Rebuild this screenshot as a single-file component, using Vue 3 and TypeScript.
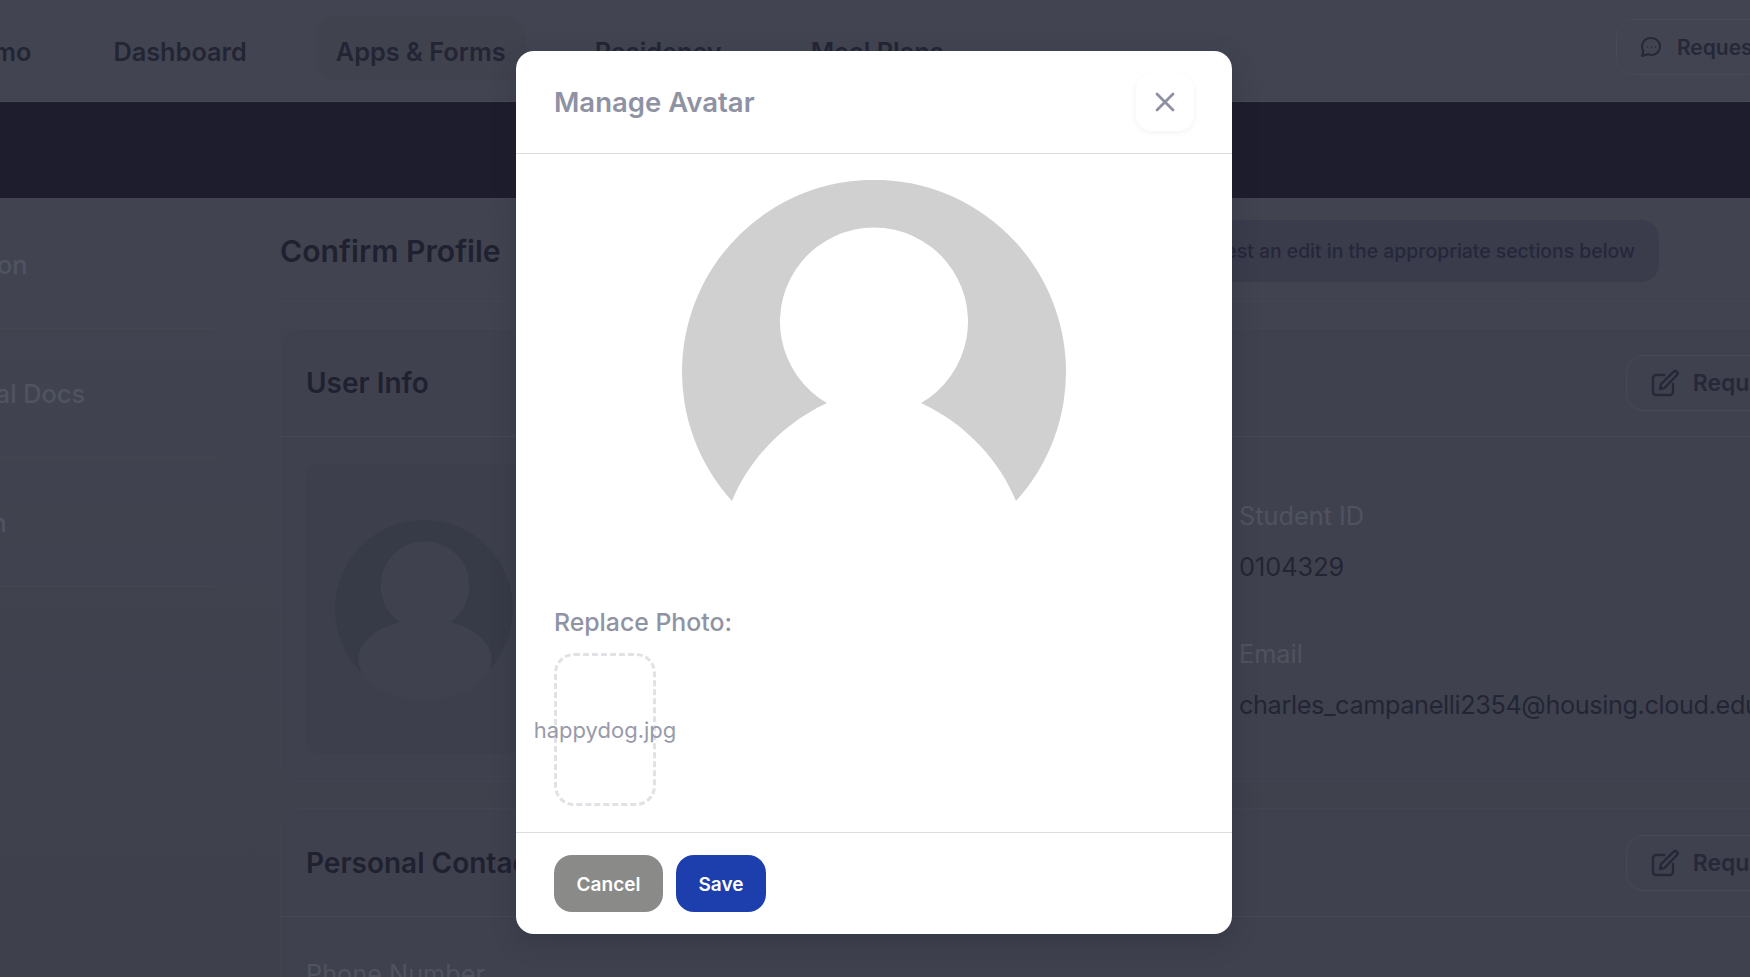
<template>
  <div class="screen">
    <div class="page">
      <header class="nav">
        <a
          v-for="item in navItems"
          :key="item"
          class="nav-item"
          :class="{ active: item === 'Apps & Forms' }"
        >
          {{ item }}
        </a>
        <button class="ghost-btn nav-action">
          <svg class="chat-icon" viewBox="0 0 24 24" fill="none" stroke="currentColor" stroke-width="2" stroke-linejoin="round">
            <path d="M12.5 3a8.5 8.5 0 1 1-3.600 16.200L3 21l1.400-5A8.500 8.500 0 0 1 12.500 3z" />
            <circle cx="8.6" cy="12" r=".7" fill="currentColor" stroke="none" />
            <circle cx="12.5" cy="12" r=".7" fill="currentColor" stroke="none" />
            <circle cx="16.4" cy="12" r=".7" fill="currentColor" stroke="none" />
          </svg>
          Request Support
        </button>
      </header>
      <div class="band"></div>

      <div class="main">
        <aside class="sidebar">
          <div v-for="link in sideLinks" :key="link" class="side-row">{{ link }}</div>
        </aside>

        <section class="content">
          <div class="title-row">
            <h1>Confirm Profile</h1>
            <div class="notice">Please request an edit in the appropriate sections below</div>
          </div>

          <div class="card">
            <div class="card-head">
              <h2>User Info</h2>
              <button class="ghost-btn edit-btn">
                <svg class="edit-icon" viewBox="0 0 28 28" fill="none" stroke="currentColor" stroke-width="2.4" stroke-linecap="round" stroke-linejoin="round">
                  <path d="M13 6H5a3 3 0 0 0-3 3v14a3 3 0 0 0 3 3h14a3 3 0 0 0 3-3v-8" />
                  <path d="M9 20l1-5L22.500 2.800a2.400 2.400 0 0 1 3.400 3.400L13.500 19z" />
                </svg>
                Request Edit
              </button>
            </div>
            <div class="user-body">
              <div class="avatar-tile">
                <svg class="small-avatar" viewBox="0 0 176 176">
                  <circle cx="88" cy="88" r="88" fill="#373a47" />
                  <circle cx="89" cy="65" r="44" fill="#3f424e" />
                  <ellipse cx="89" cy="138" rx="66" ry="40" fill="#3f424e" />
                </svg>
              </div>
              <div class="fields">
                <div class="field">
                  <span class="field-label">Student ID</span>
                  <span class="field-value">0104329</span>
                </div>
                <div class="field">
                  <span class="field-label">Email</span>
                  <span class="field-value email">charles_campanelli2354@housing.cloud.edu</span>
                </div>
              </div>
            </div>
          </div>

          <div class="card">
            <div class="card-head">
              <h2>Personal Contact</h2>
              <button class="ghost-btn edit-btn">
                <svg class="edit-icon" viewBox="0 0 28 28" fill="none" stroke="currentColor" stroke-width="2.4" stroke-linecap="round" stroke-linejoin="round">
                  <path d="M13 6H5a3 3 0 0 0-3 3v14a3 3 0 0 0 3 3h14a3 3 0 0 0 3-3v-8" />
                  <path d="M9 20l1-5L22.500 2.800a2.400 2.400 0 0 1 3.400 3.400L13.500 19z" />
                </svg>
                Request Edit
              </button>
            </div>
            <div class="contact-body">
              <span class="field-label">Phone Number</span>
            </div>
          </div>
        </section>
      </div>
    </div>

    <div class="overlay">
      <div class="modal">
        <div class="modal-head">
          <h3>Manage Avatar</h3>
          <button class="close-btn" aria-label="Close">
            <svg viewBox="0 0 20 20" fill="none" stroke="currentColor" stroke-width="2.800" stroke-linecap="round">
              <path d="M2 2l16 16M18 2L2 18" />
            </svg>
          </button>
        </div>
        <div class="modal-body">
          <svg class="big-avatar" viewBox="0 0 384 384">
            <path
              fill="#d0d0d0"
              d="M50 321A192 192 0 1 1 334 321C318 282 286 245 239 223A94 94 0 1 0 145 223C98 245 66 282 50 321z"
            />
          </svg>
          <p class="replace-label">Replace Photo:</p>
          <div class="dropzone">{{ fileName }}</div>
        </div>
        <div class="modal-foot">
          <button class="btn cancel">Cancel</button>
          <button class="btn save">Save</button>
        </div>
      </div>
    </div>
  </div>
</template>

<script setup lang="ts">
const navItems: string[] = ["Demo", "Dashboard", "Apps & Forms", "Residency", "Meal Plans"];
const sideLinks: string[] = ["Confirmation", "Confidential Docs", "Application"];
const fileName = "happydog.jpg";
</script>

<style>
html,
body {
  margin: 0;
  background: #40434f;
}
</style>

<style scoped>
.screen {
  position: relative;
  width: 1750px;
  height: 977px;
  overflow: hidden;
  font-family: Inter, "Liberation Sans", sans-serif;
  background: linear-gradient(#424551, #3e404c);
  color: #21233a;
}

.page {
  width: 2040px;
  margin-left: -150px;
}

.nav {
  display: flex;
  align-items: center;
  gap: 49px;
  height: 102px;
  padding: 0 20px 0 90px;
  box-sizing: border-box;
  border-bottom: 1px solid #474a56;
}

.nav-item {
  display: flex;
  align-items: center;
  height: 63px;
  margin-bottom: 5px;
  padding: 6px 20px 0;
  box-sizing: border-box;
  font-size: 25.3px;
  font-weight: 600;
  color: #232535;
  border-radius: 18px;
}

.nav-item:first-child {
  margin-right: -7px;
}

.nav-item.active {
  background: #40424e;
}

.ghost-btn {
  display: flex;
  align-items: center;
  height: 56px;
  padding: 0 20px;
  font-family: inherit;
  font-weight: 600;
  color: #26283a;
  background: transparent;
  border: 1px solid #484b57;
  border-radius: 18px;
  white-space: nowrap;
}

.nav-action {
  gap: 14px;
  margin-left: auto;
  margin-top: -7px;
  padding: 0 22px;
  font-size: 21px;
}

.chat-icon {
  width: 24px;
  height: 24px;
}

.band {
  height: 96px;
  background: #1e1d2e;
}

.main {
  display: flex;
}

.sidebar {
  width: 365px;
  padding: 2px 0 0 20px;
  box-sizing: border-box;
  flex: none;
}

.side-row {
  height: 129px;
  display: flex;
  align-items: center;
  box-sizing: border-box;
  font-size: 25.3px;
  font-weight: 500;
  white-space: nowrap;
  color: #505361;
  border-bottom: 1px solid #444752;
}

.content {
  margin-left: 65px;
  width: 1603px;
  flex: none;
}

.title-row {
  display: flex;
  align-items: center;
  justify-content: space-between;
  height: 104px;
  padding: 2px 224px 0 0;
  box-sizing: border-box;
  border-bottom: 1px solid #444752;
}

h1 {
  margin: 0;
  font-size: 30.2px;
  font-weight: 600;
  color: #1f2130;
}

.notice {
  display: flex;
  align-items: center;
  height: 62px;
  padding: 0 24px;
  font-size: 19.4px;
  font-weight: 500;
  color: #25273a;
  background: #3a3c4c;
  border-radius: 18px;
}

.card {
  margin-top: 26px;
  background: #3f424e;
  border: 1px solid #42454f;
  border-radius: 18px;
}

.card-head {
  display: flex;
  align-items: center;
  justify-content: space-between;
  height: 107px;
  padding: 0 25px;
  border-bottom: 1px solid #464955;
}

h2 {
  margin: 0;
  font-size: 28px;
  font-weight: 600;
  color: #1f2130;
}

.edit-btn {
  gap: 14px;
  padding: 0 24px;
  font-size: 23px;
}

.edit-icon {
  width: 28px;
  height: 28px;
}

.user-body {
  display: flex;
  gap: 28px;
  padding: 27px 25px 27px;
}

.avatar-tile {
  display: flex;
  align-items: center;
  justify-content: center;
  width: 236px;
  height: 290px;
  background: #3d404c;
  border-radius: 12px;
}

.small-avatar {
  width: 178px;
  height: 178px;
  overflow: visible;
}

.fields {
  margin-left: 669px;
  padding-top: 34px;
  display: flex;
  flex-direction: column;
  gap: 51px;
}

.field {
  display: flex;
  flex-direction: column;
  gap: 15px;
}

.field-label {
  font-size: 25.3px;
  line-height: 36px;
  color: #50535f;
}

.field-value {
  font-size: 25.3px;
  line-height: 36px;
  color: #232535;
}

.email {
  letter-spacing: -0.4px;
}

.contact-body {
  padding: 39px 25px;
}

.overlay {
  position: absolute;
  inset: 0;
  display: flex;
  justify-content: center;
  align-items: flex-start;
  padding-top: 51px;
}

.modal {
  width: 716px;
  height: 883px;
  margin-left: -2px;
  display: flex;
  flex-direction: column;
  box-sizing: border-box;
  background: #fff;
  border-radius: 18px;
  box-shadow: 0 8px 24px rgba(30, 29, 46, 0.25);
}

.modal-head {
  display: flex;
  align-items: center;
  justify-content: space-between;
  height: 103px;
  flex: none;
  padding: 0 38px;
  box-sizing: border-box;
  border-bottom: 1px solid #dcdde0;
}

h3 {
  margin: 0;
  font-size: 27.5px;
  font-weight: 600;
  color: #8f92a3;
}

.close-btn {
  display: flex;
  align-items: center;
  justify-content: center;
  width: 58px;
  height: 58px;
  padding: 0;
  color: #8e8fa3;
  background: #fff;
  border: none;
  border-radius: 16px;
  box-shadow: 0 2px 6px rgba(30, 29, 46, 0.05);
}

.close-btn svg {
  width: 20px;
  height: 20px;
}

.modal-body {
  flex: 1;
  padding: 26px 38px 0;
  box-sizing: border-box;
}

.big-avatar {
  display: block;
  width: 384px;
  height: 384px;
  margin: 0 auto;
}

.replace-label {
  margin: 40px 0 13px;
  font-size: 24.8px;
  line-height: 36px;
  font-weight: 500;
  color: #9093a3;
}

.dropzone {
  display: flex;
  align-items: center;
  justify-content: center;
  width: 102px;
  height: 153px;
  box-sizing: border-box;
  font-size: 22px;
  white-space: nowrap;
  color: #989aa9;
  border: 3px dashed #e1e2e5;
  border-radius: 20px;
}

.modal-foot {
  display: flex;
  gap: 13px;
  flex: none;
  height: 102px;
  padding: 22px 38px 0;
  box-sizing: border-box;
  border-top: 1px solid #dcdde0;
}

.btn {
  height: 57px;
  padding: 1px 22px 0;
  font-family: inherit;
  font-size: 19px;
  font-weight: 600;
  color: #fff;
  border: none;
  border-radius: 18px;
}

.cancel {
  width: 109px;
  background: #8a8a88;
}

.save {
  width: 90px;
  background: #1d3fae;
}
</style>
